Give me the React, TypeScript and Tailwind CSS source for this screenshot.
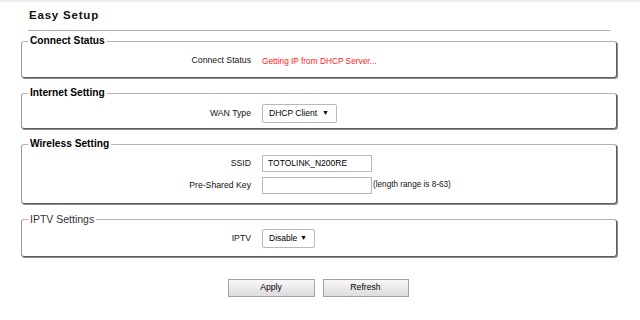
import React from "react";

const font = { fontFamily: '"Liberation Sans", Arial, sans-serif' };

function Section({
  title,
  bold = true,
  className = "",
  children,
}: {
  title: string;
  bold?: boolean;
  className?: string;
  children: React.ReactNode;
}) {
  return (
    <fieldset
      className={`m-0 min-w-0 rounded-[3px] border border-t-[#b4b4b4] border-l-[#9a9a9a] border-r-[#5f5f5f] border-b-[#5f5f5f] p-0 shadow-[1px_1px_0_#8a8a8a] ${className}`}
    >
      <legend
        className={`ml-[6px] px-[2px] leading-[12px] ${
          bold ? "text-[10.2px] font-bold text-black" : "text-[10.5px] font-normal text-[#333]"
        }`}
      >
        {title}
      </legend>
      {children}
    </fieldset>
  );
}

function Row({ label, children, h = "h-[18px]" }: { label: string; children: React.ReactNode; h?: string }) {
  return (
    <div className={`grid grid-cols-[229px_1fr] items-center gap-x-[11px] ${h}`}>
      <div className="text-right text-[8.7px] text-[#111]">{label}</div>
      <div className="flex items-center">{children}</div>
    </div>
  );
}

function FakeSelect({ value, w }: { value: string; w: string }) {
  return (
    <div
      className={`flex h-[19px] ${w} items-center justify-between rounded-[2px] border border-[#b9b9b9] bg-white pl-[6px] pr-[7px] text-[8.5px] text-black`}
    >
      <span>{value}</span>
      <span className="text-[7px]">▼</span>
    </div>
  );
}

export default function App() {
  return (
    <div className="min-h-[320px] w-[640px] bg-white" style={font}>
      <div className="h-[2px] bg-[#ececec]" />
      <div className="flex flex-col pl-[21px] pr-[23px]">
        {/* title */}
        <div className="mx-[7px] pt-[6px]">
          <div className="pl-[1px] text-[11.5px] font-bold leading-[14px] tracking-[0.8px] text-[#111]">
            Easy Setup
          </div>
          <div className="mt-[8px] h-px bg-[#a8a8a8]" />
        </div>

        <div className="mt-[4px] flex flex-col gap-[9px]">
          <Section title="Connect Status">
            <div className="pt-[5px] pb-[7px]">
              <Row label="Connect Status">
                <span className="text-[8.3px] text-[#ff1a1a]">Getting IP from DHCP Server...</span>
              </Row>
            </div>
          </Section>

          <Section title="Internet Setting">
            <div className="pt-[5px] pb-[6px]">
              <Row label="WAN Type">
                <FakeSelect value="DHCP Client" w="w-[75px]" />
              </Row>
            </div>
          </Section>

          <Section title="Wireless Setting">
            <div className="flex flex-col gap-[5px] pt-[5px] pb-[9px]">
              <Row label="SSID" h="h-[17px]">
                <div className="flex h-[17px] w-[110px] items-center border border-[#b9b9b9] bg-white pl-[5px] text-[8.5px] text-black">
                  TOTOLINK_N200RE
                </div>
              </Row>
              <Row label="Pre-Shared Key" h="h-[17px]">
                <div className="h-[17px] w-[110px] border border-[#b9b9b9] bg-white" />
                <span className="ml-[1px] text-[8.2px] text-[#111]">(length range is 8-63)</span>
              </Row>
            </div>
          </Section>

          <Section title="IPTV Settings" bold={false}>
            <div className="pt-[4px] pb-[8px]">
              <Row label="IPTV" h="h-[19px]">
                <FakeSelect value="Disable" w="w-[53px]" />
              </Row>
            </div>
          </Section>
        </div>

        {/* buttons */}
        <div className="mt-[22px] flex justify-center gap-[8px] pr-[2px]">
          <button className="h-[18px] w-[87px] border border-[#a3a3a3] bg-gradient-to-b from-[#f8f8f8] to-[#dcdcdc] text-[8.7px] text-black">
            Apply
          </button>
          <button className="h-[18px] w-[86px] border border-[#a3a3a3] bg-gradient-to-b from-[#f8f8f8] to-[#dcdcdc] text-[8.7px] text-black">
            Refresh
          </button>
        </div>
      </div>
    </div>
  );
}
